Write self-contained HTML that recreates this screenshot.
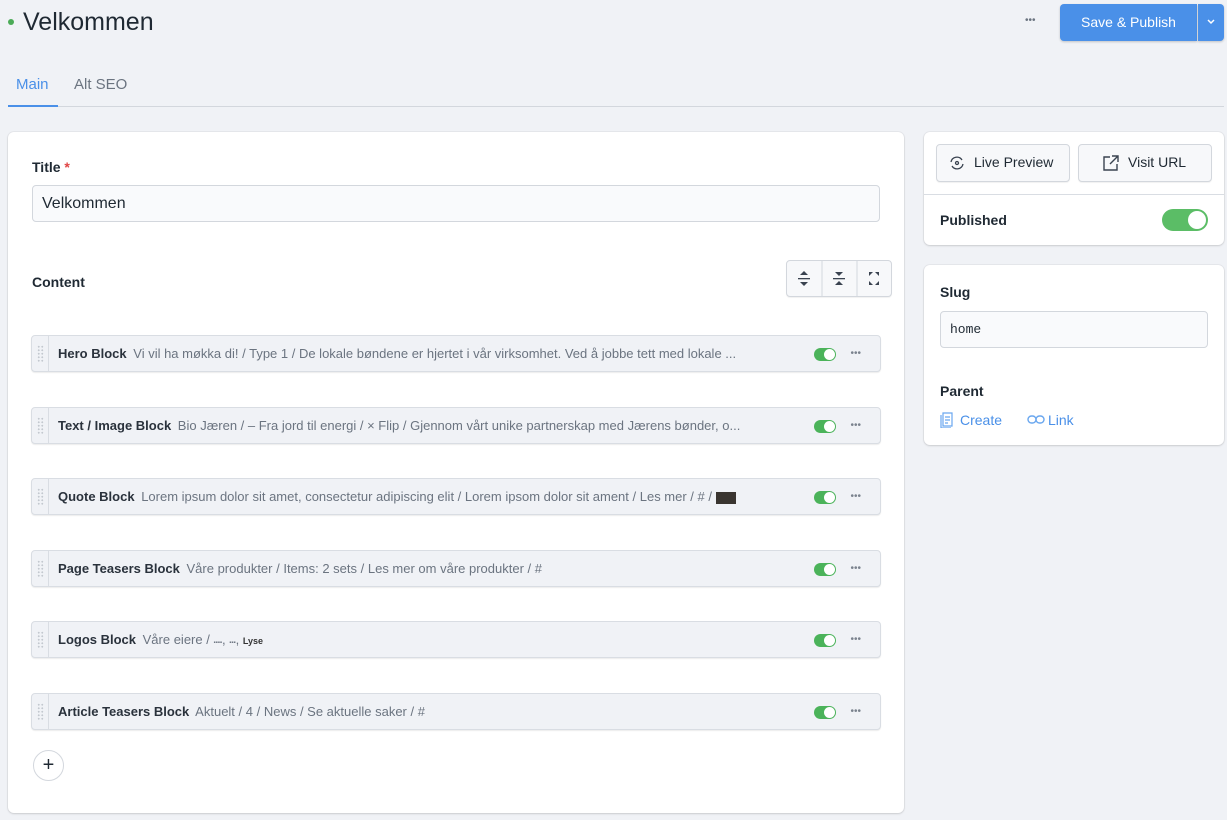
<!DOCTYPE html>
<html><head><meta charset="utf-8"><style>
*{box-sizing:border-box;margin:0;padding:0}
body{width:1227px;height:820px;background:#f0f2f6;font-family:"Liberation Sans",sans-serif;color:#1f2933;position:relative;overflow:hidden}
.abs{position:absolute}
.card{position:absolute;background:#fff;border-radius:6px;box-shadow:0 1px 2px rgba(0,0,0,.12),0 0 0 1px rgba(0,0,0,.04)}
.row{position:absolute;left:31px;width:850px;height:37px;background:#f0f2f6;border:1px solid #d9dde3;border-radius:4px;box-shadow:0 1px 1px rgba(0,0,0,.08);font-size:13px;line-height:35px;white-space:nowrap;overflow:hidden}
.row .h{position:absolute;left:0;top:0;width:17px;height:35px;border-right:1px solid #d9dde3}
.row .h::before{content:"";position:absolute;left:5px;top:9px;width:7px;height:18px;background:radial-gradient(circle,#c3c8cf 0.9px,transparent 1.1px) 0 0/3.5px 3.5px}
.row .t{position:absolute;left:26px;font-weight:bold;color:#2a323c}
.row .d{color:#6b7480;font-weight:normal;margin-left:3px}
.tg{position:absolute;right:44px;top:12px;width:22px;height:13px;border-radius:7px;background:#4bb35a}
.tg::after{content:"";position:absolute;right:1px;top:1px;width:11px;height:11px;border-radius:50%;background:#fff}
.dots{position:absolute;right:19px;top:0;color:#7b838e;font-size:10px;letter-spacing:0px}
.btn{position:absolute;background:#f7f8fa;border:1px solid #d3d7dd;border-radius:4px;box-shadow:0 1px 1px rgba(0,0,0,.06);font-size:14px;line-height:35px;color:#1f2933}
</style></head><body>
<div class="abs" style="left:8px;top:19px;width:6px;height:6px;border-radius:50%;background:#4bab57"></div>
<div class="abs" style="left:23px;top:8px;font-size:25px;color:#1f2933">Velkommen</div>
<div class="abs" style="left:1025px;top:15px;color:#6b7480;font-size:10px">•••</div>
<div class="abs" style="left:1060px;top:4px;width:137px;height:37px;background:#4a90e8;border-radius:4px 0 0 4px;color:#fff;font-size:14px;line-height:37px;text-align:center;box-shadow:0 1px 2px rgba(0,0,0,.2)">Save &amp; Publish</div>
<div class="abs" style="left:1198px;top:4px;width:26px;height:37px;background:#4a90e8;border-radius:0 4px 4px 0;box-shadow:0 1px 2px rgba(0,0,0,.2)"><svg width="26" height="37"><path d="M10 16l3 3 3-3" stroke="#fff" stroke-width="1.5" fill="none"/></svg></div>
<div class="abs" style="left:16px;top:76px;font-size:15px;color:#4a90e8">Main</div>
<div class="abs" style="left:74px;top:76px;font-size:15px;color:#6b7480">Alt SEO</div>
<div class="abs" style="left:8px;top:106px;width:1216px;height:1px;background:#d3d7dd"></div>
<div class="abs" style="left:8px;top:105px;width:50px;height:2px;background:#4a90e8"></div>

<div class="card" style="left:8px;top:132px;width:896px;height:681px"></div>
<div class="abs" style="left:32px;top:159px;font-size:14px;font-weight:bold">Title <span style="color:#e04545">*</span></div>
<div class="abs" style="left:32px;top:185px;width:848px;height:37px;border:1px solid #d3d7dd;border-radius:4px;background:#f9fafc;font-size:16px;line-height:36px;padding-left:9px">Velkommen</div>
<div class="abs" style="left:32px;top:274px;font-size:14px;font-weight:bold">Content</div>
<div class="btn" style="left:786px;top:260px;width:106px;height:37px;padding:0">
<svg width="106" height="35"><g stroke="#d3d7dd"><line x1="35" y1="0" x2="35" y2="35"/><line x1="70" y1="0" x2="70" y2="35"/></g>
<g fill="#3a4350"><path d="M13 14l4-4 4 4z M13 21l4 4 4-4z"/><rect x="11" y="17" width="12" height="1.3"/>
<path d="M48 11l4 4 4-4z M48 24l4-4 4 4z"/><rect x="46" y="17" width="12" height="1.3"/>
<path d="M82 11h4l-4 4z M92 11h-4l4 4z M82 24h4l-4-4z M92 24h-4l4-4z"/></g></svg></div>

<div class="row" style="top:335px"><div class="h"></div><div class="t">Hero Block<span class="d"> Vi vil ha møkka di! / Type 1 / De lokale bøndene er hjertet i vår virksomhet. Ved å jobbe tett med lokale ...</span></div><div class="tg"></div><div class="dots">•••</div></div>
<div class="row" style="top:407px"><div class="h"></div><div class="t">Text / Image Block<span class="d"> Bio Jæren / – Fra jord til energi / × Flip / Gjennom vårt unike partnerskap med Jærens bønder, o...</span></div><div class="tg"></div><div class="dots">•••</div></div>
<div class="row" style="top:478px"><div class="h"></div><div class="t">Quote Block<span class="d"> Lorem ipsum dolor sit amet, consectetur adipiscing elit / Lorem ipsom dolor sit ament / Les mer / # / <span style="display:inline-block;width:20px;height:12px;background:#3a3530;vertical-align:middle"></span></span></div><div class="tg"></div><div class="dots">•••</div></div>
<div class="row" style="top:550px"><div class="h"></div><div class="t">Page Teasers Block<span class="d"> Våre produkter / Items: 2 sets / Les mer om våre produkter / #</span></div><div class="tg"></div><div class="dots">•••</div></div>
<div class="row" style="top:621px"><div class="h"></div><div class="t">Logos Block<span class="d"> Våre eiere / <span style="font-size:6px">▪▪▪▪</span>, <span style="font-size:6px">▪▪▪</span>, <b style="font-size:9px;color:#333">Lyse</b></span></div><div class="tg"></div><div class="dots">•••</div></div>
<div class="row" style="top:693px"><div class="h"></div><div class="t">Article Teasers Block<span class="d"> Aktuelt / 4 / News / Se aktuelle saker / #</span></div><div class="tg"></div><div class="dots">•••</div></div>
<div class="abs" style="left:33px;top:750px;width:31px;height:31px;border-radius:50%;background:#fff;border:1px solid #d3d7dd;text-align:center;line-height:28px;font-size:20px">+</div>

<div class="card" style="left:924px;top:132px;width:300px;height:113px"></div>
<div class="btn" style="left:936px;top:144px;width:134px;height:38px;padding-left:37px">Live Preview</div>
<svg class="abs" style="left:949px;top:155px" width="16" height="16" fill="none" stroke="#3a4350" stroke-width="1.3"><path d="M2 7a6 6 0 0 1 11-2M14 9a6 6 0 0 1-11 2"/><circle cx="8" cy="8" r="1.5"/></svg>
<div class="btn" style="left:1078px;top:144px;width:134px;height:38px;padding-left:49px">Visit URL</div>
<svg class="abs" style="left:1102px;top:154px" width="18" height="18" fill="none" stroke="#3a4350" stroke-width="1.4"><path d="M8 3H2v13h13v-6M10 2h6v6M16 2l-8 8"/></svg>
<div class="abs" style="left:924px;top:194px;width:300px;height:1px;background:#d9dde3"></div>
<div class="abs" style="left:940px;top:212px;font-size:14px;font-weight:bold">Published</div>
<div class="abs" style="left:1162px;top:209px;width:46px;height:22px;border-radius:11px;background:#5bbd66"><div style="position:absolute;right:2px;top:2px;width:18px;height:18px;border-radius:50%;background:#fff"></div></div>

<div class="card" style="left:924px;top:265px;width:300px;height:180px"></div>
<div class="abs" style="left:940px;top:284px;font-size:14px;font-weight:bold">Slug</div>
<div class="abs" style="left:940px;top:311px;width:268px;height:37px;border:1px solid #d3d7dd;border-radius:4px;background:#f9fafc;font-family:'Liberation Mono',monospace;font-size:13px;line-height:35px;padding-left:9px">home</div>
<div class="abs" style="left:940px;top:383px;font-size:14px;font-weight:bold">Parent</div>
<svg class="abs" style="left:940px;top:411px" width="16" height="17" fill="none" stroke="#6aa7ef" stroke-width="1.2"><path d="M3 2h9v13H3zM1 4v13h10M5 6h5M5 9h5M5 12h3"/></svg>
<div class="abs" style="left:960px;top:412px;font-size:14px;color:#4a90e8">Create</div>
<svg class="abs" style="left:1027px;top:414px" width="18" height="12" fill="none" stroke="#6aa7ef" stroke-width="1.4"><rect x="1" y="2" width="8" height="7" rx="3.5"/><rect x="9" y="2" width="8" height="7" rx="3.5"/></svg>
<div class="abs" style="left:1048px;top:412px;font-size:14px;color:#4a90e8">Link</div>
</body></html>
